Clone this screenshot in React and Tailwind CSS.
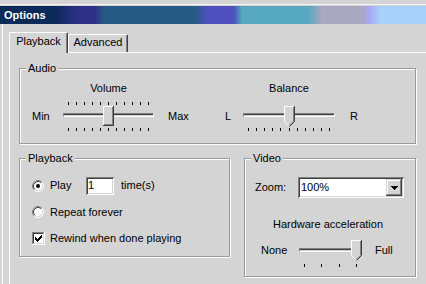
import React from "react";

const ETCH =
  "border border-[#9a9a9a] shadow-[1px_1px_0_#ffffff,inset_1px_1px_0_#ffffff]";
const SUNKEN =
  "shadow-[inset_1px_1px_0_#808080,inset_-1px_-1px_0_#ffffff,inset_2px_2px_0_#404040,inset_-2px_-2px_0_#d4d4d4]";
const RAISED =
  "shadow-[inset_-1px_-1px_0_#404040,inset_1px_1px_0_#d4d4d4,inset_-2px_-2px_0_#808080,inset_2px_2px_0_#ffffff]";

function GroupBox({ label, className, children }) {
  return (
    <div className={`relative shrink-0 ${ETCH} ${className}`}>
      <span className="absolute left-[6px] top-[-7px] px-[2px] bg-[#d4d4d4] leading-[13px]">
        {label}
      </span>
      {children}
    </div>
  );
}

function RectThumb() {
  return (
    <svg width="11" height="20" viewBox="0 0 11 20" shapeRendering="crispEdges">
      <rect x="0" y="0" width="11" height="20" fill="#d4d4d4" />
      <rect x="0" y="0" width="10" height="1" fill="#ffffff" />
      <rect x="0" y="0" width="1" height="19" fill="#ffffff" />
      <rect x="10" y="0" width="1" height="20" fill="#404040" />
      <rect x="0" y="19" width="11" height="1" fill="#404040" />
      <rect x="9" y="1" width="1" height="18" fill="#808080" />
      <rect x="1" y="18" width="9" height="1" fill="#808080" />
    </svg>
  );
}

function PointThumb() {
  return (
    <svg width="11" height="21" viewBox="0 0 11 21">
      <polygon points="0,0 11,0 11,15 5.5,20.5 0,15" fill="#d4d4d4" />
      <polyline points="0.5,15.5 0.5,0.5 10,0.5" fill="none" stroke="#ffffff" />
      <line x1="0.5" y1="15.5" x2="5" y2="20" stroke="#ffffff" />
      <polyline points="10.5,0 10.5,15.5 5.5,20.5" fill="none" stroke="#404040" />
      <polyline points="9.5,1 9.5,15.2 5,19.7" fill="none" stroke="#808080" />
    </svg>
  );
}

function Ticks({ positions, className }) {
  return (
    <div className={`absolute left-0 right-0 h-[3px] ${className}`}>
      {positions.map((p, i) => (
        <span
          key={i}
          className="absolute top-0 w-[1px] h-[3px] bg-black"
          style={{ left: p }}
        />
      ))}
    </div>
  );
}

function Trackbar({ width, count, value, pointed, topTicks, boxClass, thumbTop, trackTop, tickTop }) {
  const step = (width - 11) / (count - 1);
  const positions = Array.from({ length: count }, (_, i) => Math.round(5 + i * step));
  const thumbLeft = Math.round(value * step);
  return (
    <div className={`relative shrink-0 ${boxClass}`}>
      {topTicks && <Ticks positions={positions} className="top-0" />}
      <div
        className={`absolute left-0 right-0 h-[4px] bg-[#d4d4d4] border-t border-l border-[#808080] border-b border-r border-b-white border-r-white shadow-[inset_0_1px_0_#404040] ${trackTop}`}
      />
      <div className={`absolute ${thumbTop}`} style={{ left: thumbLeft }}>
        {pointed ? <PointThumb /> : <RectThumb />}
      </div>
      <Ticks positions={positions} className={tickTop} />
    </div>
  );
}

function Radio({ checked }) {
  return (
    <svg width="12" height="12" viewBox="0 0 12 12">
      <circle cx="6" cy="6" r="5" fill="#ffffff" />
      <path d="M2.11 9.89 A5.5 5.5 0 0 1 9.89 2.11" fill="none" stroke="#808080" />
      <path d="M9.89 2.11 A5.5 5.5 0 0 1 2.11 9.89" fill="none" stroke="#ffffff" />
      <path d="M2.82 9.18 A4.5 4.5 0 0 1 9.18 2.82" fill="none" stroke="#404040" />
      <path d="M9.18 2.82 A4.5 4.5 0 0 1 2.82 9.18" fill="none" stroke="#d4d4d4" />
      {checked && <circle cx="6" cy="6" r="2" fill="#000000" />}
    </svg>
  );
}

function Checkbox() {
  const check = [
    [6, 0], [5, 1], [6, 1], [0, 2], [4, 2], [5, 2], [6, 2],
    [0, 3], [1, 3], [3, 3], [4, 3], [5, 3],
    [0, 4], [1, 4], [2, 4], [3, 4], [4, 4],
    [1, 5], [2, 5], [3, 5], [2, 6],
  ];
  return (
    <svg width="13" height="13" viewBox="0 0 13 13" shapeRendering="crispEdges">
      <rect x="0" y="0" width="13" height="13" fill="#ffffff" />
      <rect x="0" y="0" width="12" height="1" fill="#808080" />
      <rect x="0" y="0" width="1" height="12" fill="#808080" />
      <rect x="1" y="1" width="10" height="1" fill="#404040" />
      <rect x="1" y="1" width="1" height="10" fill="#404040" />
      <rect x="1" y="11" width="11" height="1" fill="#d4d4d4" />
      <rect x="11" y="1" width="1" height="11" fill="#d4d4d4" />
      {check.map(([x, y], i) => (
        <rect key={i} x={x + 3} y={y + 3} width="1" height="1" fill="#000000" />
      ))}
    </svg>
  );
}

export default function App() {
  return (
    <div className="w-[426px] h-[284px] overflow-hidden bg-[#d4d4d4] text-black text-[11px] leading-[13px] font-['Liberation_Sans',Arial,sans-serif] flex flex-col">
      {/* top edge */}
      <div className="h-[4px] shrink-0" />
      <div className="h-[1px] shrink-0 bg-[#f4f4f4]" />
      <div className="h-[1px] shrink-0" />
      {/* title bar */}
      <div className="h-[18px] shrink-0 flex items-center pl-[4px] text-white font-bold bg-[linear-gradient(to_right,#0a2a5a_0px,#0a2a5a_55px,#2e3088_78px,#2e3088_95px,#285a86_105px,#285a86_195px,#5050c0_208px,#5050c0_234px,#56a8c0_242px,#56a8c0_308px,#a8a8c0_322px,#a8a8c0_362px,#a8a8f8_370px,#a8d0f8_380px,#a8d0f8_426px)]">
        Options
      </div>

      {/* body */}
      <div className="flex-1 ml-[2px] border-l border-white pl-[6px] flex flex-col">
        {/* tabs */}
        <div className="h-[28px] shrink-0 flex items-end">
          <div className="relative z-10 mb-[-1px] w-[59px] h-[21px] pt-[2px] text-center bg-[#d4d4d4] border-l border-t border-white border-r border-r-[#404040] rounded-t-[2px] shadow-[inset_-1px_0_0_#808080]">
            Playback
          </div>
          <div className="w-[60px] h-[18px] pt-[1px] text-center border-l border-t border-white border-r border-r-[#404040] rounded-t-[2px] shadow-[inset_-1px_0_0_#808080]">
            Advanced
          </div>
        </div>

        {/* panel */}
        <div className="flex-1 border-t border-l border-white flex flex-col pl-[9px] pt-[15px]">
          {/* Audio */}
          <GroupBox label="Audio" className="w-[397px] h-[76px] pt-[13px] pl-[12px] flex">
            <div className="flex flex-col w-[166px] shrink-0">
              <div className="ml-[31px] w-[91px] text-center">Volume</div>
              <div className="mt-[7px] flex items-start">
                <span className="w-[31px] mt-[8px]">Min</span>
                <Trackbar
                  width={91}
                  count={11}
                  value={5}
                  topTicks
                  boxClass="w-[91px] h-[29px]"
                  thumbTop="top-[4px]"
                  trackTop="top-[11px]"
                  tickTop="top-[26px]"
                />
                <span className="ml-[14px] mt-[8px]">Max</span>
              </div>
            </div>
            <div className="flex flex-col ml-[27px]">
              <div className="ml-[18px] w-[92px] text-center">Balance</div>
              <div className="mt-[7px] flex items-start">
                <span className="w-[18px] mt-[8px]">L</span>
                <Trackbar
                  width={92}
                  count={11}
                  value={5}
                  pointed
                  boxClass="w-[92px] h-[29px]"
                  thumbTop="top-[4px]"
                  trackTop="top-[11px]"
                  tickTop="top-[26px]"
                />
                <span className="ml-[15px] mt-[8px]">R</span>
              </div>
            </div>
          </GroupBox>

          <div className="mt-[14px] flex items-start">
            {/* Playback */}
            <GroupBox label="Playback" className="w-[211px] h-[99px] pt-[13px] pl-[12px] flex flex-col">
              <div className="h-[27px] flex items-center">
                <span className="w-[18px] flex">
                  <Radio checked />
                </span>
                <span className="w-[36px]">Play</span>
                <div className={`w-[28px] h-[18px] bg-white pl-[2px] flex items-center ${SUNKEN}`}>
                  1
                </div>
                <span className="ml-[7px]">time(s)</span>
              </div>
              <div className="h-[26px] flex items-center">
                <span className="w-[18px] flex">
                  <Radio />
                </span>
                <span>Repeat forever</span>
              </div>
              <div className="h-[27px] flex items-center">
                <span className="w-[18px] flex">
                  <Checkbox />
                </span>
                <span>Rewind when done playing</span>
              </div>
            </GroupBox>

            {/* Video */}
            <GroupBox label="Video" className="ml-[14px] w-[172px] h-[119px] pt-[18px] flex flex-col">
              <div className="pl-[10px] flex items-center h-[21px]">
                <span className="w-[43px]">Zoom:</span>
                <div className={`w-[106px] h-[21px] bg-white flex items-center justify-between p-[2px] ${SUNKEN}`}>
                  <span className="pl-[1px]">100%</span>
                  <span className={`w-[16px] h-[17px] bg-[#d4d4d4] flex items-center justify-center ${RAISED}`}>
                    <svg width="7" height="4" viewBox="0 0 7 4" shapeRendering="crispEdges">
                      <rect x="0" y="0" width="7" height="1" fill="#000" />
                      <rect x="1" y="1" width="5" height="1" fill="#000" />
                      <rect x="2" y="2" width="3" height="1" fill="#000" />
                      <rect x="3" y="3" width="1" height="1" fill="#000" />
                    </svg>
                  </span>
                </div>
              </div>
              <div className="mt-[20px] w-[166px] text-center">Hardware acceleration</div>
              <div className="mt-[9px] pl-[16px] flex items-start">
                <span className="w-[38px] mt-[4px]">None</span>
                <Trackbar
                  width={63}
                  count={4}
                  value={3}
                  pointed
                  boxClass="w-[63px] h-[27px]"
                  thumbTop="top-0"
                  trackTop="top-[8px]"
                  tickTop="top-[24px]"
                />
                <span className="ml-[13px] mt-[4px]">Full</span>
              </div>
            </GroupBox>
          </div>
        </div>
      </div>
    </div>
  );
}
